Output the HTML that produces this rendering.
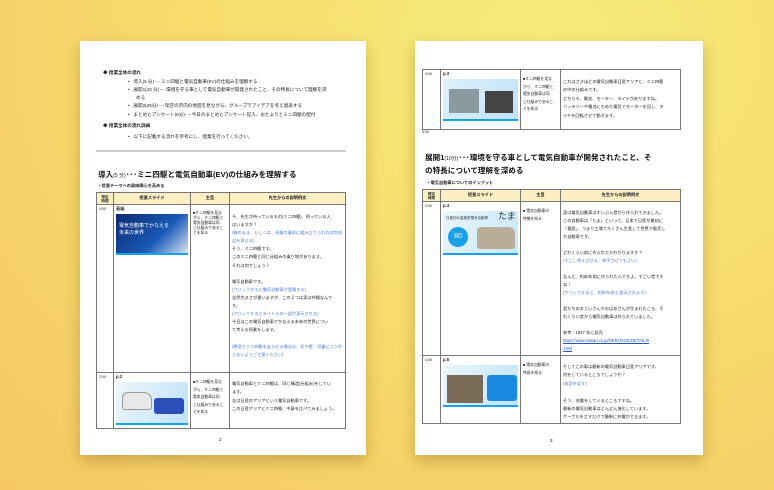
<!DOCTYPE html>
<html><head><meta charset="utf-8">
<style>
*{margin:0;padding:0;box-sizing:border-box}
body{width:774px;height:490px;overflow:hidden;position:relative;
background:radial-gradient(ellipse at 70% 10%,#f6ec7a 0%,#f7dc6c 45%,#f5c864 100%);
font-family:"Liberation Sans","Noto Sans CJK JP",sans-serif;color:#222}
.page{position:absolute;background:#fff;box-shadow:0 6px 14px rgba(120,90,20,.35)}
.a{position:absolute;white-space:nowrap;font-size:4.6px;line-height:6px}
.b{font-weight:bold}
.blue{color:#4a7ad8}
.h{font-size:7.6px;font-weight:bold;line-height:10px;color:#111}
table{position:absolute;border-collapse:collapse;table-layout:fixed;font-size:4.2px;line-height:6.4px}
td,th{border:0.8px solid #777;vertical-align:top;padding:1px 2px;white-space:nowrap;overflow:hidden}
th{background:#fdefc4;font-weight:bold;text-align:center;vertical-align:middle;height:12px;padding:0}
.sl{display:block;margin-top:2px;height:40px;border-bottom:2px solid #18a0e8}
.lnk{color:#2255cc;text-decoration:underline}
.s{font-size:3.8px;line-height:7.6px}
</style></head><body>

<div class="page" style="left:80px;top:41px;width:286px;height:414px"></div>
<div class="page" style="left:415px;top:41px;width:288px;height:414px"></div>

<!-- left page -->
<div class="a b" style="left:103px;top:70px">◆ 授業全体の流れ</div>
<div class="a" style="left:128px;top:79px">•&nbsp;&nbsp; 導入(5 分)･･･ミニ四駆と電気自動車(EV)の仕組みを理解する</div>
<div class="a" style="left:128px;top:87px">•&nbsp;&nbsp; 展開1(10 分)･･･環境を守る車として電気自動車が開発されたこと、その特長について理解を深</div>
<div class="a" style="left:136px;top:95px">める</div>
<div class="a" style="left:128px;top:103px">•&nbsp;&nbsp; 展開2(25分)･･･架空の市内の地図を見ながら、グループでアイデアを考え発表する</div>
<div class="a" style="left:128px;top:112px">•&nbsp;&nbsp; まとめとアンケート(5分)･･･今日のまとめとアンケート記入、おたよりとミニ四駆の配付</div>
<div class="a b" style="left:103px;top:123px">◆ 授業全体の流れ詳細</div>
<div class="a" style="left:128px;top:134px">•&nbsp;&nbsp; 以下に記載する流れを参考にし、授業を行ってください。</div>
<div style="position:absolute;left:96px;top:150px;width:250px;height:1.5px;background:#ccc"></div>
<div class="a h" style="left:98px;top:170px">導入<span style="font-size:5px;font-weight:normal">(5 分)</span>･･･ミニ四駆と電気自動車(EV)の仕組みを理解する</div>
<div class="a b" style="left:99px;top:183px;font-size:4.2px">• 授業テーマへの興味関心を高める</div>

<table style="left:96px;top:192px;width:250px">
<colgroup><col style="width:17px"><col style="width:77px"><col style="width:39px"><col></colgroup>
<tr><th style="font-size:3.6px;line-height:4px">想定<br>時間</th><th>授業スライド</th><th>主旨</th><th>先生からの説明例文</th></tr>
<tr><td style="font-size:3.6px;height:168px">0:00</td><td><b>表紙</b><span class="sl" style="background:linear-gradient(135deg,#0c2a6e,#1a5ab8 60%,#d8e4f0);height:41px;color:#fff;font-size:5px;line-height:7px;padding:9px 3px">電気自動車でかなえる<br>未来の世界</span></td>
<td class="s" style="padding-top:6px;line-height:5px">■ミニ四駆を見な<br>がら、ミニ四駆と<br>電気自動車は同<br>じ仕組みであるこ<br>とを知る</td>
<td style="padding-top:8px;line-height:8.1px">今、先生が持っているもの(ミニ四駆)、知っている人<br>はいますか？<br><span class="blue">(箱のまま、もしくは、授業の事前に組み立てられれば完成<br>品を見せる)</span><br>そう、ミニ四駆です。<br>このミニ四駆と同じ仕組みの乗り物があります。<br>それは何でしょう？<br><br>電気自動車です。<br><span class="blue">(クリックすると電気自動車が登場する)</span><br>全然大きさが違いますが、この２つは実は仲間なんで<br>す。<br><span class="blue">(クリックするとタイトルの一部が表示される)</span><br>今日はこの電気自動車でかなえる未来の世界につい<br>て考える授業をします。<br><br><span class="blue">(教室でミニ四駆を走らせる場合は、机や壁、児童にぶつか<br>らないようご注意ください)</span></td></tr>
<tr><td style="font-size:3.6px;height:56px">2:00</td><td><b>p.2</b><span class="sl" style="background:linear-gradient(120deg,#eef5fb,#bfe3f7);height:43px;position:relative"><span style="position:absolute;left:6px;top:10px;width:30px;height:18px;background:#e8e8e8;border:1px solid #999;border-radius:6px 8px 3px 3px"></span><span style="position:absolute;left:38px;top:16px;width:30px;height:16px;background:#2b4fb8;border-radius:3px"></span></span></td>
<td class="s" style="padding-top:6px">■ミニ四駆を見な<br>がら、ミニ四駆と<br>電気自動車は同<br>じ仕組みであるこ<br>とを知る</td>
<td style="padding-top:7px;line-height:8.4px">電気自動車とミニ四駆は、同じ構造(仕組み)をしてい<br>ます。<br>左は日産のアリアという電気自動車です。<br>この日産アリアとミニ四駆、中身を比べてみましょう。</td></tr>
</table>
<div class="a" style="left:219px;top:437px">2</div>

<!-- right page -->
<table style="left:422px;top:69px;width:259px">
<colgroup><col style="width:18px"><col style="width:80px"><col style="width:40px"><col></colgroup>
<tr><td style="font-size:3.6px;height:60px">3:00</td><td><b>p.3</b><span class="sl" style="background:linear-gradient(120deg,#dff0fb,#bfe3f7);height:42px;position:relative"><span style="position:absolute;left:6px;top:10px;width:30px;height:24px;background:#8a9aa0"></span><span style="position:absolute;left:42px;top:12px;width:28px;height:22px;background:#444"></span></span></td>
<td class="s" style="padding-top:6px">■ミニ四駆を見な<br>がら、ミニ四駆と<br>電気自動車は同<br>じ仕組みであるこ<br>とを知る</td>
<td style="padding-top:8px;line-height:8.4px">これはさきほどの電気自動車日産アリアと、ミニ四駆<br>の中の仕組みです。<br>どちらも、電池、モーター、タイヤがありますね。<br>バッテリーや電池にためた電気でモーターを回し、タ<br>イヤを回転させて動きます。</td></tr>
</table>
<div class="a" style="left:422px;top:129px;font-size:3.6px">5:00</div>
<div class="a h" style="left:425px;top:153px">展開1<span style="font-size:5px;font-weight:normal">(10分)</span>･･･環境を守る車として電気自動車が開発されたこと、そ</div>
<div class="a h" style="left:425px;top:166px">の特長について理解を深める</div>
<div class="a b" style="left:428px;top:180px;font-size:4.2px">• 電気自動車についてのインプット</div>

<table style="left:422px;top:189px;width:259px">
<colgroup><col style="width:18px"><col style="width:80px"><col style="width:40px"><col></colgroup>
<tr><th style="font-size:3.6px;line-height:4px">想定<br>時間</th><th>授業スライド</th><th>主旨</th><th>先生からの説明例文</th></tr>
<tr><td style="font-size:3.6px;height:154px">3:00</td><td><b>p.4</b><span class="sl" style="background:linear-gradient(120deg,#e8f5fd,#c8e8f8);height:44px;position:relative"><span style="position:absolute;left:3px;top:4px;font-size:3.5px;color:#333">日産初の量産型電気自動車</span><span style="position:absolute;left:5px;top:16px;width:20px;height:20px;border-radius:50%;background:#1aa0e8;color:#fff;font-size:7px;text-align:center;line-height:20px">80</span><span style="position:absolute;left:55px;top:2px;font-size:9px;color:#333">たま</span><span style="position:absolute;left:34px;top:16px;width:38px;height:22px;background:#b8ad98;border-radius:4px 6px 3px 3px"></span></span></td>
<td class="s" style="padding-top:6px">■ 電気自動車の<br>特徴を知る</td>
<td style="padding-top:7px;line-height:8px">実は電気自動車はずいぶん昔から作られてきました。<br>この自動車は「たま」といって、日本で日産が最初に<br>「量産」、つまり工場でたくさん生産して世界で販売し<br>た自動車です。<br><br>どれくらい前に作られたかわかりますか？<br><span class="blue">(すこし考えさせる、挙手させてもよい)</span><br><br>なんと、約80年前に作られたんですよ。すごい昔です<br>ね！<br><span class="blue">(クリックすると、約80年前と表示されます)</span><br><br>君たちのおじいさんやおばあさんが生まれたころ、そ<br>れくらい昔から電気自動車は作られていました。<br><br>参考：1947 年に発売<br><span class="lnk" style="line-height:5px">https://www.nissan.co.jp/HERITAGE/DETAIL/9<br>.html</span></td></tr>
<tr><td style="font-size:3.6px;height:67px">4:00</td><td><b>p.5</b><span class="sl" style="background:linear-gradient(120deg,#eaf6fd,#bfe3f7);height:42px;position:relative"><span style="position:absolute;left:4px;top:10px;width:36px;height:28px;background:#7a6a58"></span><span style="position:absolute;left:44px;top:10px;width:30px;height:26px;background:#1a8ae0;border-radius:3px"></span></span></td>
<td class="s" style="padding-top:6px">■ 電気自動車の<br>特長を知る</td>
<td style="padding-top:7px;line-height:8.4px">そしてこの車は最新の電気自動車日産アリアです。<br>何をしているところでしょうか？<br><span class="blue">(発話を促す)</span><br><br>そう、充電をしているところですね。<br>最新の電気自動車はどんどん進化しています。<br>ケーブルをさすだけで簡単に充電ができます。</td></tr>
</table>
<div class="a" style="left:550px;top:438px">3</div>
</body></html>
